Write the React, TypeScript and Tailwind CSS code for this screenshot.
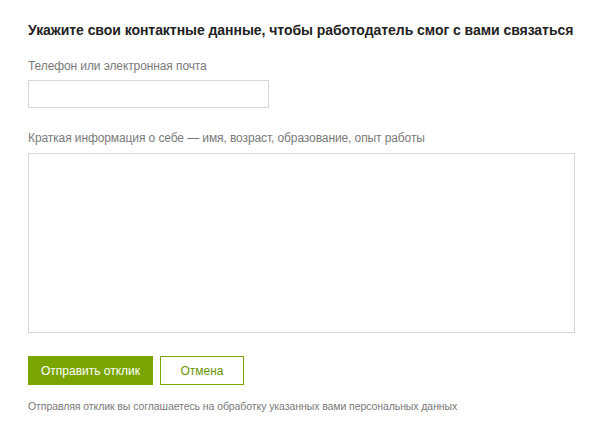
export default function App() {
  return (
    <div className="h-[432px] w-[600px] bg-white px-[28px] pt-[20px] font-['Liberation_Sans',Arial,sans-serif]">
      <h1 className="whitespace-nowrap text-[14px] font-bold leading-[20px] tracking-[-0.05px] text-[#222]">
        Укажите свои контактные данные, чтобы работодатель смог с вами связаться
      </h1>

      <label className="mt-[17px] block text-[12px] leading-[18px] tracking-[-0.1px] text-[#7a7a7a]">
        Телефон или электронная почта
      </label>
      <input
        type="text"
        className="mt-[5px] block h-[28px] w-[241px] border border-[#d6d6d6] bg-white outline-none"
      />

      <label className="mt-[21px] block text-[12px] leading-[18px] tracking-[-0.1px] text-[#7a7a7a]">
        Краткая информация о себе — имя, возраст, образование, опыт работы
      </label>
      <textarea className="mt-[6px] block h-[180px] w-[547px] resize-none border border-[#d6d6d6] bg-white outline-none" />

      <div className="mt-[23px] flex gap-[7px]">
        <button className="h-[29px] w-[125px] bg-[#7aa500] text-[12px] text-white">
          Отправить отклик
        </button>
        <button className="h-[29px] w-[84px] border border-[#7aa500] bg-white text-[12px] text-[#6b9400]">
          Отмена
        </button>
      </div>

      <p className="mt-[14px] text-[10.5px] leading-[14px] tracking-[-0.08px] text-[#7a7a7a]">
        Отправляя отклик вы соглашаетесь на обработку указанных вами персональных данных
      </p>
    </div>
  )
}
